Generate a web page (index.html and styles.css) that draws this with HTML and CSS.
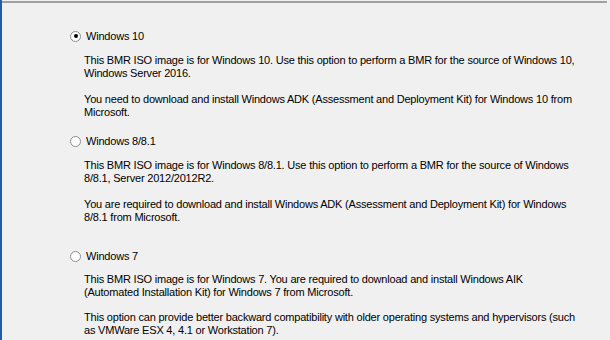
FILE: index.html
```html
<!DOCTYPE html>
<html>
<head>
    <title>Boot Kit Options</title>
    <link rel="stylesheet" href="styles.css">
</head>
<body>
    <div class="frame">
        <div class="panel">
            <div class="option first">
                <label class="choice"><span class="radio checked"></span>Windows 10</label>
                <div class="desc">
                    <p>This BMR ISO image is for Windows 10. Use this option to perform a BMR for the source of Windows 10,<br>Windows Server 2016.</p>
                    <p>You need to download and install Windows ADK (Assessment and Deployment Kit) for Windows 10 from<br>Microsoft.</p>
                </div>
            </div>

            <div class="option second">
                <label class="choice"><span class="radio"></span>Windows 8/8.1</label>
                <div class="desc">
                    <p>This BMR ISO image is for Windows 8/8.1. Use this option to perform a BMR for the source of Windows<br>8/8.1, Server 2012/2012R2.</p>
                    <p>You are required to download and install Windows ADK (Assessment and Deployment Kit) for Windows<br>8/8.1 from Microsoft.</p>
                </div>
            </div>

            <div class="option third">
                <label class="choice"><span class="radio"></span>Windows 7</label>
                <div class="desc">
                    <p>This BMR ISO image is for Windows 7. You are required to download and install Windows AIK<br>(Automated Installation Kit) for Windows 7 from Microsoft.</p>
                    <p>This option can provide better backward compatibility with older operating systems and hypervisors (such<br>as VMWare ESX 4, 4.1 or Workstation 7).</p>
                </div>
            </div>
        </div>
    </div>
</body>
</html>
```

FILE: styles.css
```css
body { margin: 0; background: #f0f0f0; font-family: "Liberation Sans", Arial, sans-serif; font-size: 11px; letter-spacing: -0.2px; color: #000; }
.frame { height: 340px; border-left: 2px solid #1c5ea8; box-sizing: border-box; overflow: hidden; }
.panel { border-top: 2px solid #a0a0a0; margin: 1px 3px 0 0; }
.option { padding-left: 68px; }
.option.first { padding-top: 26px; }
.option.second { margin-top: 15px; }
.option.third { margin-top: 25px; }
.option.third .desc { margin-top: 10px; }
.option.third .desc p { margin-bottom: 12px; }
.choice { display: flex; align-items: center; height: 14px; line-height: 14px; }
.radio { width: 11px; height: 11px; border: 1px solid #8c8c8c; border-radius: 50%; background: #fff; margin-right: 5px; box-sizing: border-box; display: flex; align-items: center; justify-content: center; }
.radio.checked::after { content: ""; width: 4px; height: 4px; border-radius: 50%; background: #000; }
.desc { padding-left: 14px; margin-top: 11px; white-space: nowrap; }
.desc p { margin: 0 0 13px; line-height: 13px; }
.desc p:last-child { margin-bottom: 0; }
```
